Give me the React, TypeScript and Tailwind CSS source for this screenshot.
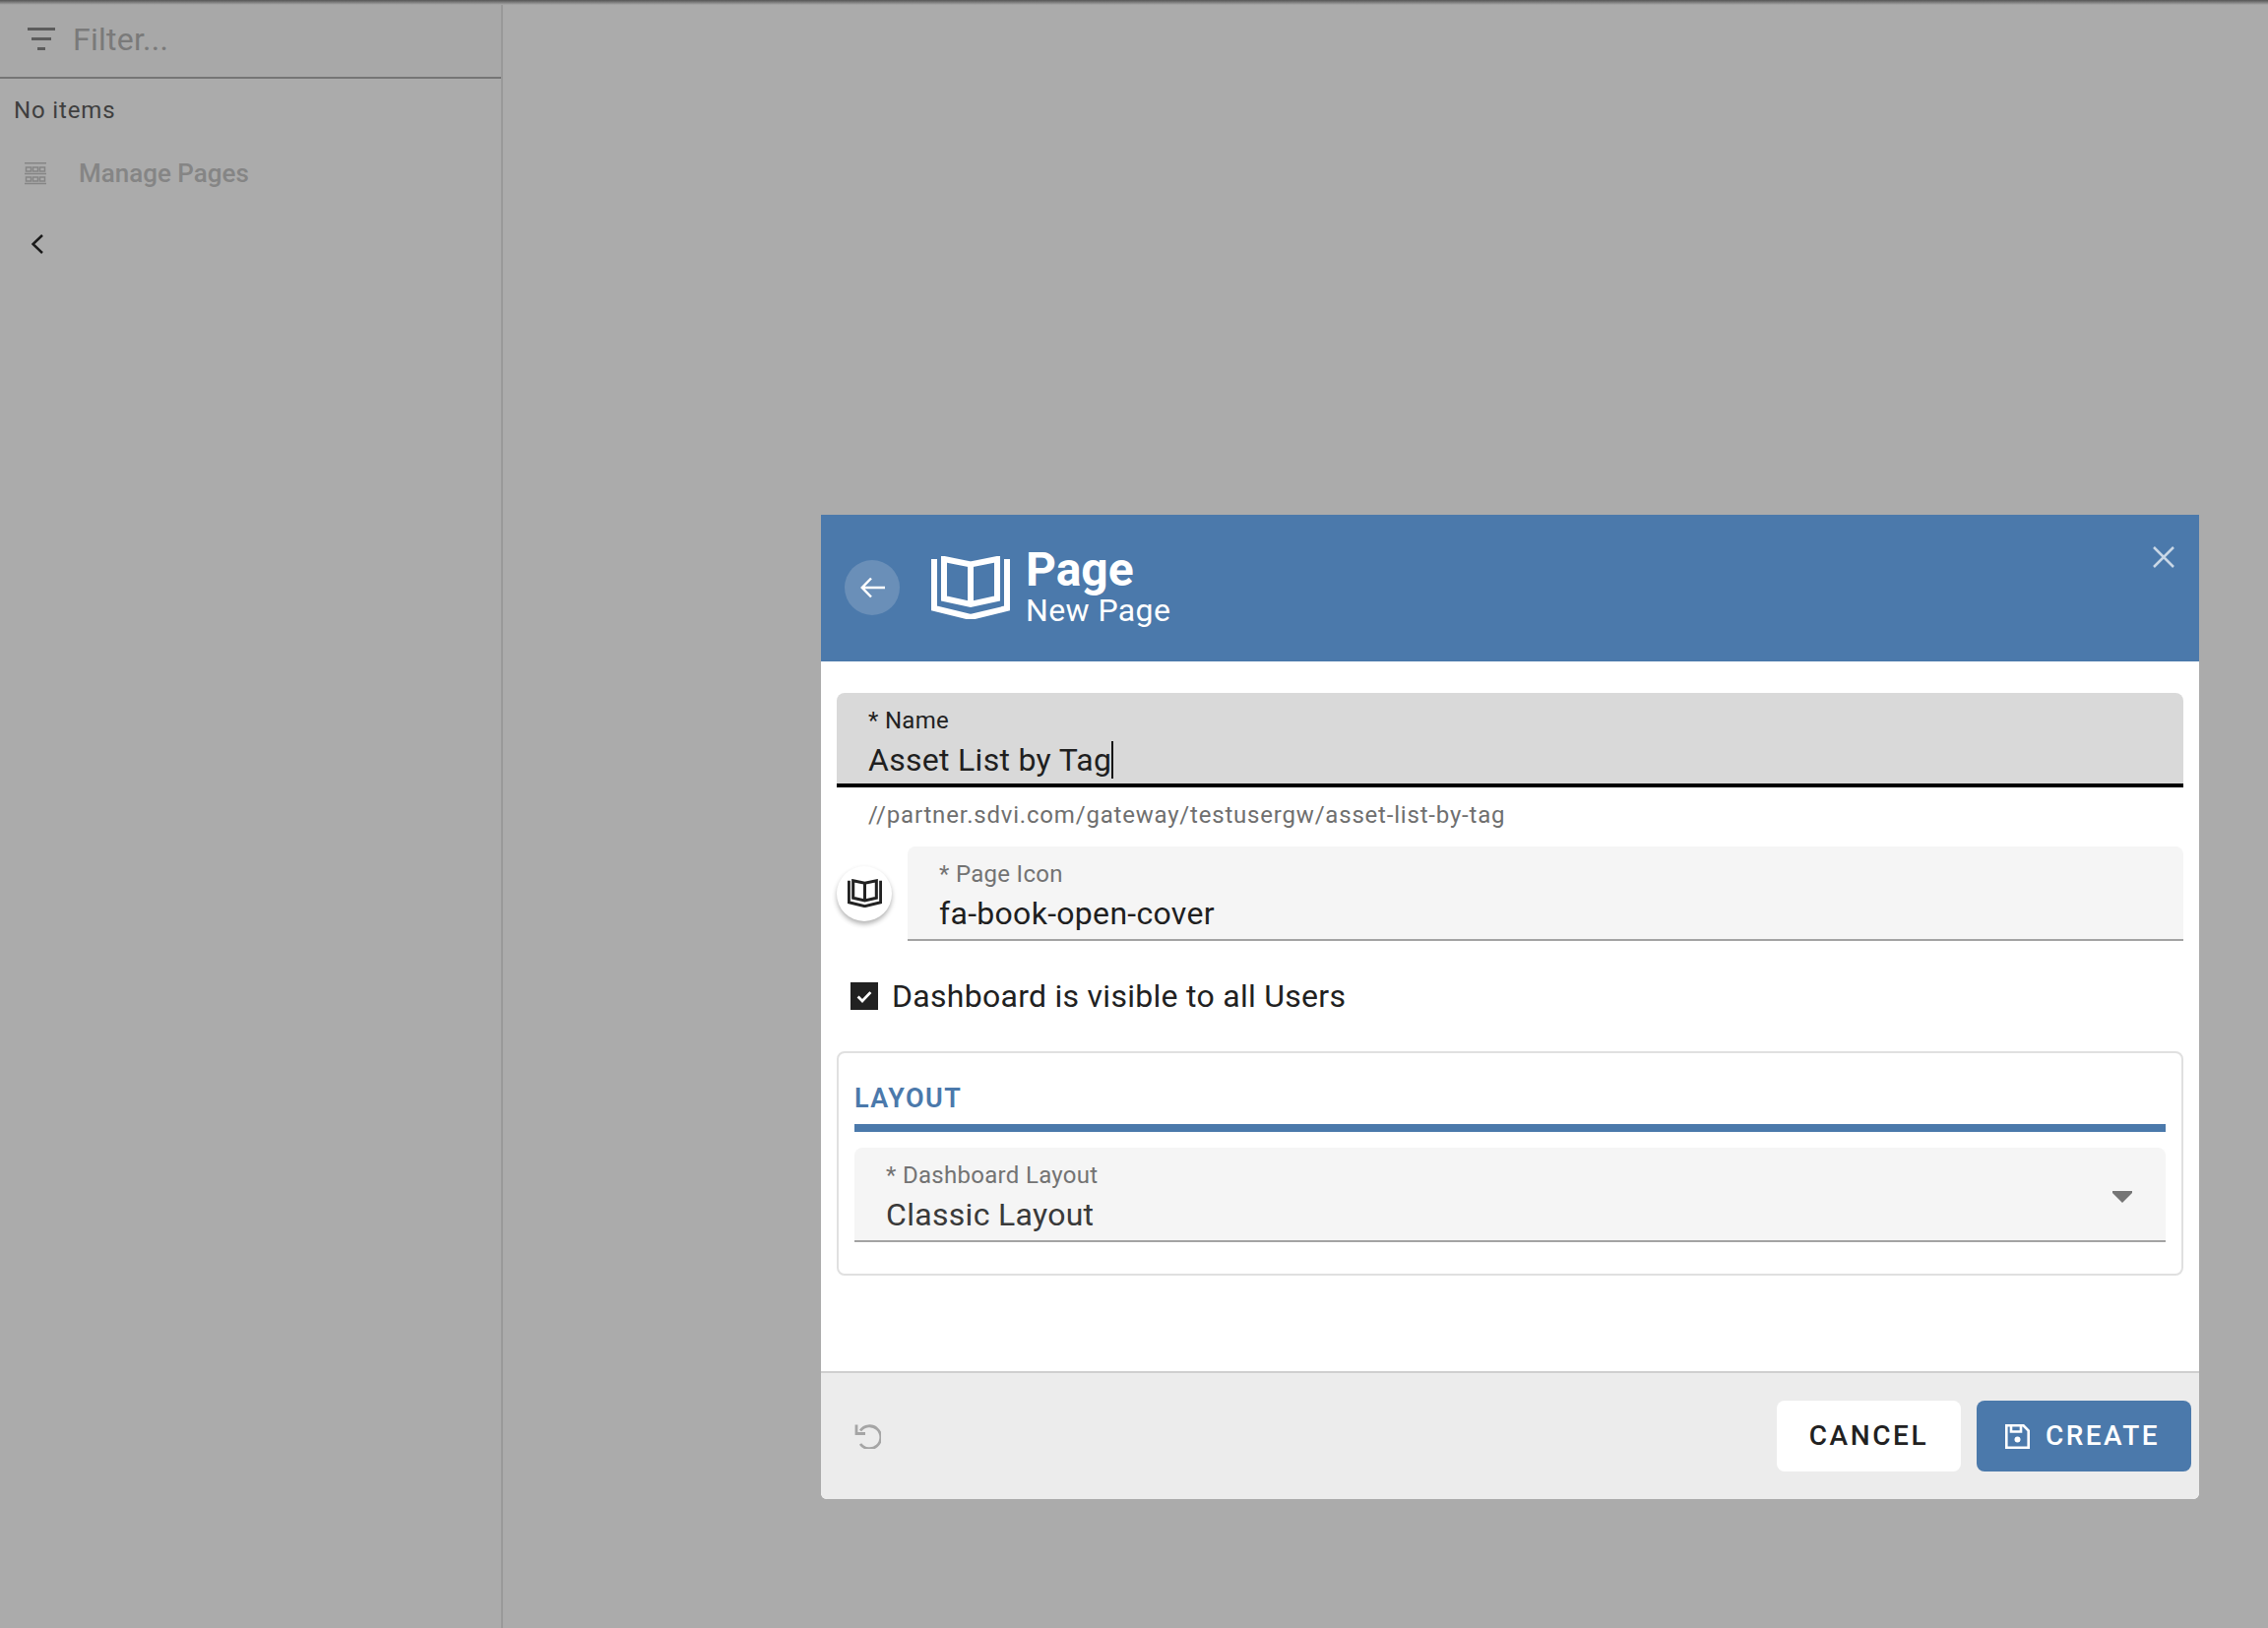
import React from "react";

const BookIcon = ({ className, heavy }: { className?: string; heavy?: boolean }) => (
  <svg viewBox="0 0 80 64" className={className} fill="none" stroke="currentColor">
    <path d="M3 3V53L40 62L77 53V3" strokeWidth={heavy ? 7 : 6} />
    <path d="M13 3L40 8.5L67 3V43L40 49L13 43Z" strokeWidth={heavy ? 7 : 6} />
    <path d="M40 8V49" strokeWidth={heavy ? 7 : 6} />
  </svg>
);

const Field = ({ label, value, className, labelClass, valueClass }: { label: string; value: React.ReactNode; className: string; labelClass: string; valueClass: string }) => (
  <div className={`h-[96px] pl-8 pt-[13px] rounded-t-[8px] flex flex-col ${className}`}>
    <div className={`text-[24px] leading-[30px] tracking-[0.3px] ${labelClass}`}>{label}</div>
    <div className={`mt-[5px] text-[32px] leading-[40px] tracking-[0.3px] ${valueClass}`}>{value}</div>
  </div>
);

export default function App() {
  return (
    <div className="relative flex h-screen w-full overflow-hidden bg-[#ababab] font-['Roboto',sans-serif]">
      <div className="absolute left-0 right-0 top-0 h-[5px] bg-gradient-to-b from-[#555555] to-[#ababab]" />
      <div className="w-[511px] shrink-0 border-r-2 border-[#999999] flex flex-col">
        <div className="h-[80px] shrink-0 border-b-[2px] border-[#757575] flex items-center pl-[28px] bg-[#a8a8a8]">
          <svg viewBox="0 0 28 23" className="w-[28px] h-[23px] text-[#5c5c5c]" fill="currentColor">
            <rect x="0" y="0" width="28" height="3" />
            <rect x="4" y="10" width="20" height="3" />
            <rect x="10" y="20" width="8" height="3" />
          </svg>
          <span className="ml-[18px] pt-[2px] text-[32px] text-[#7a7a7a] tracking-[0.25px]">Filter...</span>
        </div>
        <div className="mt-[18px] pl-[14px] text-[24px] leading-[28px] tracking-[0.85px] text-[#3f3f3f]">No items</div>
        <div className="mt-[36px] flex items-center pl-[25px] h-[28px]">
          <svg viewBox="0 0 22 23" className="w-[22px] h-[23px] text-[#858585]" fill="none" stroke="currentColor">
            <path d="M0 .75H22M0 11.5H22M0 21.5H22" strokeWidth="1.5" />
            <path d="M1.5 5H6.5V9H1.5ZM8.5 5H13.5V9H8.5ZM15.5 5H20.5V9H15.5ZM1.5 15H6.5V19H1.5ZM8.5 15H13.5V19H8.5ZM15.5 15H20.5V19H15.5Z" strokeWidth="1.5" />
          </svg>
          <span className="ml-[33px] text-[26px] font-medium text-[#858585]">Manage Pages</span>
        </div>
        <div className="mt-[48px] pl-[32px]">
          <svg viewBox="0 0 12 20" className="w-[12px] h-[20px] text-[#1a1a1a]" fill="none" stroke="currentColor" strokeWidth="2.5">
            <path d="M11 1L1.5 10L11 19" />
          </svg>
        </div>
      </div>
      <div className="flex-1" />

      {/* modal */}
      <div className="absolute left-[834px] top-[523px] w-[1400px] h-[1000px] bg-white rounded-b-[6px] flex flex-col overflow-hidden">
        <div className="relative h-[149px] shrink-0 bg-[#4b79ab] flex items-center pl-[24px] pb-[2px] text-white">
          <div className="w-[56px] h-[56px] rounded-full bg-[#6a8fb8] flex items-center justify-center">
            <svg viewBox="0 0 26 22" className="ml-[1px] w-[26px] h-[22px]" fill="none" stroke="currentColor" strokeWidth="2.5">
              <path d="M25 11H2M11 1.5L1.8 11L11 20.5" />
            </svg>
          </div>
          <BookIcon className="ml-[32px] w-[80px] h-[64px]" />
          <div className="ml-[16px] flex flex-col">
            <div className="text-[48px] leading-[46px] font-bold">Page</div>
            <div className="text-[32px] leading-[36px] tracking-[0.4px]">New Page</div>
          </div>
          <svg viewBox="0 0 22 22" className="absolute left-[1353px] top-[32px] w-[22px] h-[22px] text-white/70" fill="none" stroke="currentColor" strokeWidth="2.5">
            <path d="M1 1L21 21M21 1L1 21" />
          </svg>
        </div>

        <div className="flex-1 px-4 pt-8 flex flex-col">
          <Field
            label="* Name"
            className="bg-[#d9d9d9] border-b-[4px] border-black"
            labelClass="text-[#222222]"
            valueClass="text-[#1f1f1f]"
            value={
              <span className="inline-flex items-center">
                Asset List by Tag
                <span className="inline-block w-[2px] h-[38px] bg-[#111111]" />
              </span>
            }
          />
          <div className="mt-[14px] pl-8 text-[24px] leading-[28px] tracking-[0.8px] text-[#6f6f6f]">//partner.sdvi.com/gateway/testusergw/asset-list-by-tag</div>
          <div className="mt-[18px] flex items-center">
            <div className="w-[56px] h-[56px] rounded-full bg-white shadow-[0_3px_5px_rgba(0,0,0,0.3)] flex items-center justify-center shrink-0 text-[#222222]">
              <BookIcon heavy className="w-[35px] h-[29px] mb-[2px]" />
            </div>
            <div className="flex-1 ml-[16px]">
              <Field
                label="* Page Icon"
                value="fa-book-open-cover"
                className="bg-[#f5f5f5] border-b-[2px] border-[#a3a3a3]"
                labelClass="text-[#737373]"
                valueClass="text-[#1f1f1f]"
              />
            </div>
          </div>
          <div className="mt-[38px] ml-[14px] h-[36px] flex items-center">
            <div className="w-[28px] h-[28px] bg-[#212121] flex items-center justify-center">
              <svg viewBox="0 0 20 16" className="w-[16px] h-[13px] text-white" fill="none" stroke="currentColor" strokeWidth="3.5">
                <path d="M2 8L7.5 13.5L18 2.5" />
              </svg>
            </div>
            <span className="ml-[14px] text-[32px] tracking-[0.28px] text-[#212121]">Dashboard is visible to all Users</span>
          </div>
          <div className="mt-[38px] h-[228px] border-2 border-[#e0e0e0] rounded-[8px] px-4 flex flex-col">
            <div className="mt-[26px] h-[40px] flex items-center text-[27px] font-semibold tracking-[1.5px] text-[#4b79ab]">LAYOUT</div>
            <div className="h-[8px] bg-[#4b79ab] mt-[6px]" />
            <div className="relative mt-[16px]">
              <Field
                label="* Dashboard Layout"
                value="Classic Layout"
                className="bg-[#f5f5f5] border-b-[2px] border-[#a3a3a3]"
                labelClass="text-[#737373]"
                valueClass="text-[#3a3a3a]"
              />
              <svg viewBox="0 0 20 12" className="absolute right-[34px] top-[44px] w-[20px] h-[12px] text-[#757575]" fill="currentColor">
                <path d="M0 0H20V2L10 12L0 2Z" />
              </svg>
            </div>
          </div>
        </div>

        <div className="h-[130px] shrink-0 bg-[#ececec] border-t-2 border-[#cfcfcf] flex items-center pl-[34px] pr-[8px]">
          <svg viewBox="0 0 27 26" className="w-[27px] h-[26px] text-[#a5a5a5]" fill="none" stroke="currentColor" strokeWidth="2.8">
            <path d="M6 7.5A11.5 11.5 0 1 1 6 21" />
            <path d="M2 1.5V10.5H11" />
          </svg>
          <div className="flex-1" />
          <button className="w-[187px] h-[72px] bg-white rounded-[8px] text-[28px] font-medium tracking-[2.6px] text-[#212121]">CANCEL</button>
          <button className="ml-[16px] w-[218px] h-[72px] bg-[#4b79ab] rounded-[8px] flex items-center pl-[29px] text-[28px] font-medium tracking-[2.4px] text-white">
            <svg viewBox="0 0 25 25" className="w-[25px] h-[25px]" fill="none" stroke="currentColor" strokeWidth="2.6">
              <path d="M1.3 1.3H18.5L23.7 6.5V23.7H1.3Z" />
              <path d="M6 1.3V7.5H16V1.3" />
              <circle cx="12.5" cy="15.5" r="3" fill="currentColor" stroke="none" />
            </svg>
            <span className="ml-[16px]">CREATE</span>
          </button>
        </div>
      </div>
    </div>
  );
}
